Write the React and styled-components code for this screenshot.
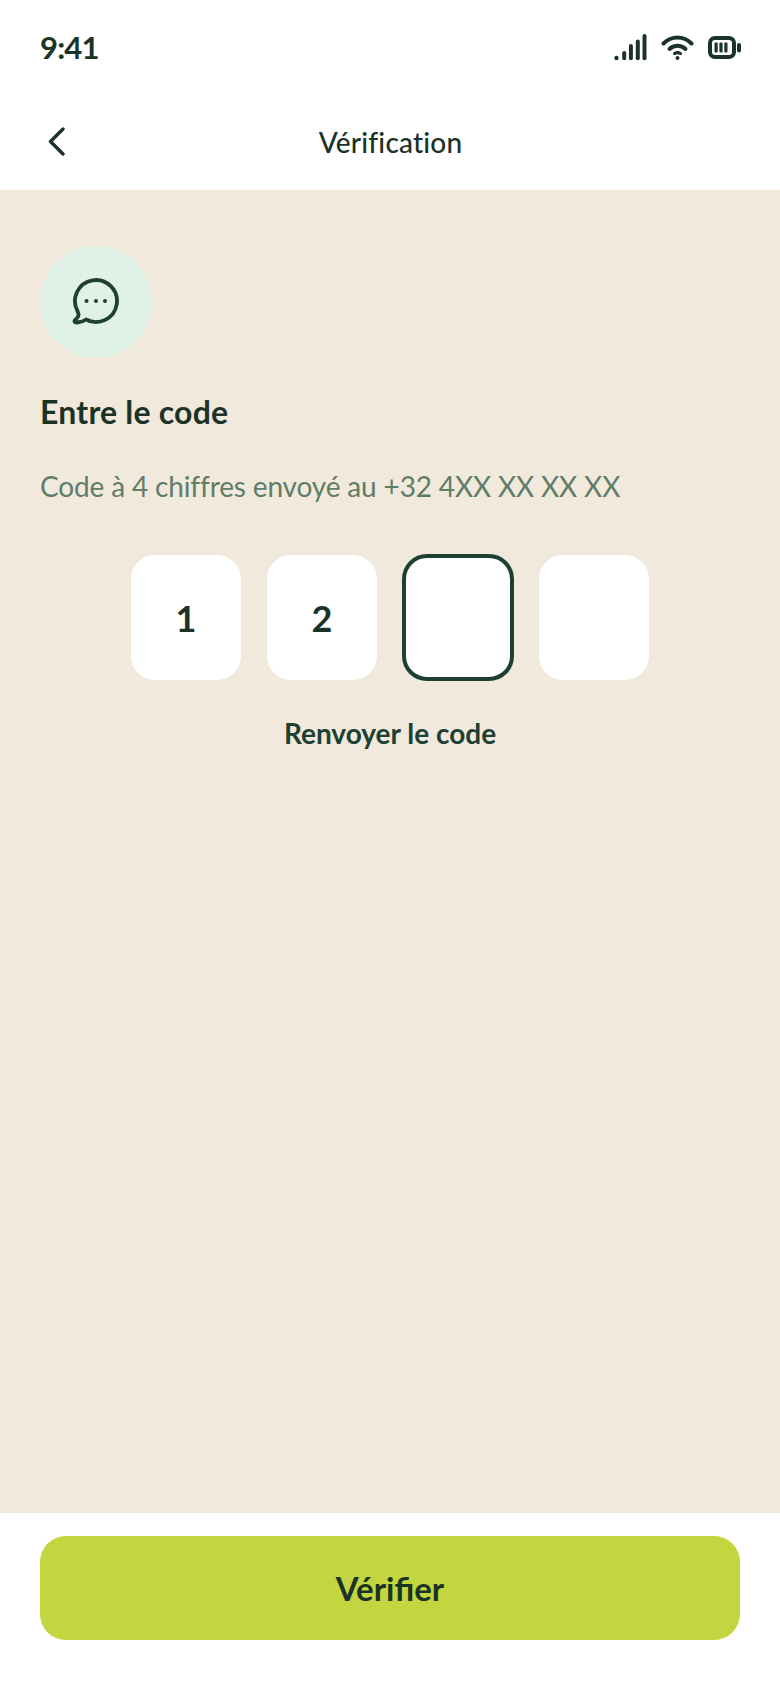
import React from 'react'
import styled, { createGlobalStyle } from 'styled-components'

const GlobalStyle = createGlobalStyle`
html, body {
  margin: 0;
  padding: 0;
  background: #fff;
}
* {
  box-sizing: border-box;
}
`

const Screen = styled.div`
width: 780px;
height: 1688px;
display: flex;
flex-direction: column;
font-family: "Lato", "Noto Sans", sans-serif;
color: #1b3327;
background: #fff;
`

const StatusBar = styled.div`
height: 96px;
padding: 0 40px 0 40px;
display: flex;
align-items: center;
justify-content: space-between;
`

const Time = styled.div`
font-size: 31px;
font-weight: 700;
line-height: 1;
letter-spacing: -0.8px;
margin-top: -2px;
`

const StatusIcons = styled.div`
display: flex;
align-items: center;
gap: 14px;
margin-right: -1px;
margin-top: -2px;
`

const NavBar = styled.div`
height: 94px;
padding: 0 40px 3px 48px;
display: flex;
align-items: center;
position: relative;
`

const NavTitle = styled.div`
flex: 1;
margin-left: -8px;
padding-right: 16px;
text-align: center;
font-size: 28px;
font-weight: 500;
letter-spacing: 0.2px;
`

const Content = styled.div`
flex: 1;
background: #f1e9dc;
padding: 56px 40px 0;
display: flex;
flex-direction: column;
`

const IconCircle = styled.div`
width: 112px;
height: 112px;
border-radius: 50%;
background: #e0f1e8;
display: flex;
align-items: center;
justify-content: center;
padding: 0 2px 2px 0;
`

const Title = styled.h1`
margin: 34px 0 0;
font-size: 32px;
line-height: 40px;
font-weight: 700;
letter-spacing: 0.2px;
color: #1b3327;
`

const Subtitle = styled.p`
margin: 36px 0 0;
font-size: 28px;
line-height: 36px;
font-weight: 400;
letter-spacing: -0.15px;
color: #5f7d68;
`

const CodeRow = styled.div`
margin-top: 51px;
display: flex;
justify-content: center;
gap: 26px;
`

const CodeBox = styled.div`
width: 110px;
height: 125px;
border-radius: 24px;
background: #fff;
display: flex;
align-items: center;
justify-content: center;
font-size: 36px;
font-weight: 700;
color: #1b3327;
outline: ${props => (props.$active ? '4px solid #1e4032' : 'none')};
outline-offset: -3px;
`

const Resend = styled.div`
margin-top: 35px;
text-align: center;
font-size: 28px;
line-height: 36px;
font-weight: 700;
color: #1e4032;
`

const Footer = styled.div`
height: 175px;
padding: 23px 40px 0;
background: #fff;
`

const VerifyButton = styled.button`
width: 100%;
height: 104px;
border: none;
border-radius: 26px;
background: #c4d63f;
color: #1b3327;
font-family: inherit;
font-size: 33px;
font-weight: 700;
`

const SignalIcon = () => (
  <svg width="33" height="27" viewBox="0 0 33 27" fill="#1b3327">
    <circle cx="2.5" cy="24" r="2.2" />
    <rect x="8.2" y="17" width="4" height="9.2" rx="2" />
    <rect x="14.9" y="10" width="4" height="16.2" rx="2" />
    <rect x="21.8" y="5.5" width="4" height="20.7" rx="2" />
    <rect x="28.5" y="0" width="4" height="26.2" rx="2" />
  </svg>
)

const WifiIcon = () => (
  <svg width="33" height="26" viewBox="0 0 33 26" fill="none" stroke="#1b3327" strokeWidth="4" strokeLinecap="round">
    <path d="M2.5 9.5C10.5 1.5 22.5 1.5 30.5 9.5" />
    <path d="M8.5 15C13 10.8 20 10.8 24.5 15" />
    <path d="M13.5 19.6C15.3 18.4 17.7 18.4 19.5 19.6" strokeWidth="3" />
    <circle cx="16.5" cy="24" r="2" fill="#1b3327" stroke="none" />
  </svg>
)

const BatteryIcon = () => (
  <svg width="33" height="23" viewBox="0 0 33 23" fill="none">
    <rect x="2" y="2" width="24" height="19" rx="5" stroke="#1b3327" strokeWidth="4" />
    <rect x="6.5" y="6.5" width="3.2" height="10" rx="1" fill="#1b3327" />
    <rect x="11.4" y="6.5" width="3.2" height="10" rx="1" fill="#1b3327" />
    <rect x="16.3" y="6.5" width="3.2" height="10" rx="1" fill="#1b3327" />
    <rect x="29" y="7" width="4" height="9.5" rx="2" fill="#1b3327" />
  </svg>
)

const BackIcon = () => (
  <svg width="17" height="29" viewBox="0 0 17 29" fill="none" stroke="#1b3327" strokeWidth="3.4" strokeLinecap="round" strokeLinejoin="round">
    <path d="M15 2L2.5 14.5L15 27" />
  </svg>
)

const ChatIcon = () => (
  <svg width="48" height="48" viewBox="0 0 48 48" fill="none" stroke="#1e4032" strokeWidth="3.8" strokeLinecap="round" strokeLinejoin="round">
    <path d="M15 42.5A21 21 0 1 0 6.5 34L7.5 37Q8 39 6 41L4 43Q2.5 45.5 5.5 45.5L9 45Q12 44.5 15 42.5Z" />
    <circle cx="15.5" cy="24" r="2" fill="#1e4032" stroke="none" />
    <circle cx="25" cy="24" r="2" fill="#1e4032" stroke="none" />
    <circle cx="34" cy="24" r="2" fill="#1e4032" stroke="none" />
  </svg>
)

const code = ['1', '2', '', '']

const App = () => {
  return (
    <Screen>
      <GlobalStyle />
      <StatusBar>
        <Time>9:41</Time>
        <StatusIcons>
          <SignalIcon />
          <WifiIcon />
          <BatteryIcon />
        </StatusIcons>
      </StatusBar>
      <NavBar>
        <BackIcon />
        <NavTitle>Vérification</NavTitle>
      </NavBar>
      <Content>
        <IconCircle>
          <ChatIcon />
        </IconCircle>
        <Title>Entre le code</Title>
        <Subtitle>Code à 4 chiffres envoyé au +32 4XX XX XX XX</Subtitle>
        <CodeRow>
          {code.map((digit, i) => (
            <CodeBox key={i} $active={i === 2}>{digit}</CodeBox>
          ))}
        </CodeRow>
        <Resend>Renvoyer le code</Resend>
      </Content>
      <Footer>
        <VerifyButton>Vérifier</VerifyButton>
      </Footer>
    </Screen>
  )
}

export default App
